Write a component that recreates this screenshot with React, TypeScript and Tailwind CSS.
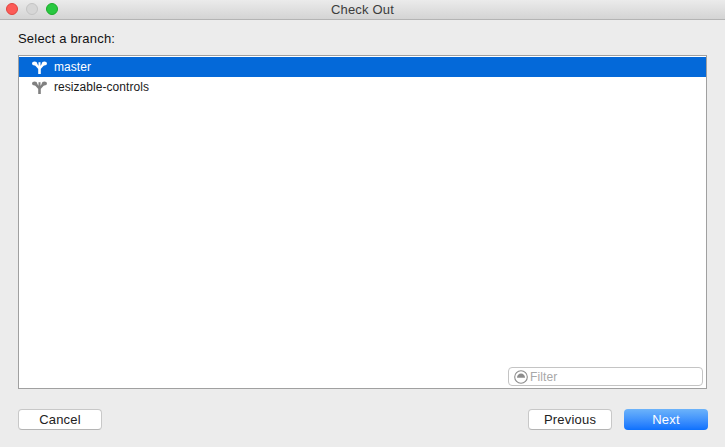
import React from "react";

const font = "font-['Liberation_Sans',Arial,sans-serif]";

function BranchIcon({ color }: { color: string }) {
  return (
    <svg width="15" height="13" viewBox="0 0 15 13" className="shrink-0">
      <path d="M7.5 13V7.5L3.6 3.2M7.5 7.5L11.4 3.2" fill="none" stroke={color} strokeWidth="2.6" />
      <ellipse cx="2.6" cy="2.6" rx="2.6" ry="2" fill={color} />
      <ellipse cx="12.4" cy="2.6" rx="2.6" ry="2" fill={color} />
      <rect x="6.5" y="1.2" width="2" height="6" fill={color} />
    </svg>
  );
}

function BranchRow({ name, selected }: { name: string; selected?: boolean }) {
  return (
    <div
      className={`flex h-5 items-center pl-[13px] text-[12px] tracking-[0.05px] ${
        selected ? "bg-[#0469d9] text-white" : "text-[#1a1a1a]"
      }`}
    >
      <BranchIcon color={selected ? "#ffffff" : "#808080"} />
      <span className="ml-[7px]">{name}</span>
    </div>
  );
}

function DialogButton({ label, className }: { label: string; className?: string }) {
  return (
    <button
      className={`h-[21px] w-[84px] rounded-[4px] border border-[#c8c8c8] border-b-[#b4b4b4] bg-white text-[13px] leading-none tracking-[0.2px] text-[#222222] ${className ?? ""}`}
    >
      {label}
    </button>
  );
}

export default function App() {
  return (
    <div className={`flex h-[447px] w-[725px] flex-col overflow-hidden bg-[#ececec] ${font}`}>
      {/* title bar */}
      <div className="relative flex h-5 shrink-0 items-center justify-center border-b border-[#b4b4b4] bg-gradient-to-b from-[#ebebeb] to-[#d4d4d4] text-[13px] tracking-[0.2px] text-[#3c3c3c]">
        <div className="absolute left-[6px] top-[3px] flex gap-2">
          <span className="h-3 w-3 rounded-full border border-[#e0443e] bg-[#fc5b57]" />
          <span className="h-3 w-3 rounded-full border border-[#c4c4c4] bg-[#d6d6d6]" />
          <span className="h-3 w-3 rounded-full border border-[#1aab29] bg-[#28c840]" />
        </div>
        Check Out
      </div>

      <div className="flex flex-1 flex-col pl-[18px] pr-[18px] pb-[17px]">
        <div className="mt-[10px] h-[25px] text-[13px] leading-[18px] tracking-[0.2px] text-[#111111]">Select a branch:</div>

        {/* branch list */}
        <div className="relative h-[334px] border border-[#a0a0a0] bg-white pt-px">
          <BranchRow name="master" selected />
          <BranchRow name="resizable-controls" />
          <div className="absolute bottom-[2px] right-[3px] flex h-[19px] w-[195px] items-center rounded-[4px] border border-[#c4c4c4] bg-white pl-[5px] text-[12px] tracking-[0.1px] text-[#a8a8a8]">
            <svg width="14" height="14" viewBox="0 0 14 14" className="shrink-0">
              <circle cx="7" cy="7" r="6.3" fill="none" stroke="#8c8c8c" strokeWidth="1.1" />
              <path d="M3 7.8C3 5.2 4.8 3.4 7 3.4S11 5.2 11 7.8Z" fill="#8c8c8c" />
            </svg>
            <span className="ml-[2px]">Filter</span>
          </div>
        </div>

        {/* footer */}
        <div className="-mr-px mt-auto flex items-center">
          <DialogButton label="Cancel" />
          <DialogButton label="Previous" className="ml-auto" />
          <button className="ml-3 h-[21px] w-[84px] rounded-[4px] bg-gradient-to-b from-[#6cb3fa] to-[#0b70fd] text-[13px] leading-none tracking-[0.2px] text-white">
            Next
          </button>
        </div>
      </div>
    </div>
  );
}
